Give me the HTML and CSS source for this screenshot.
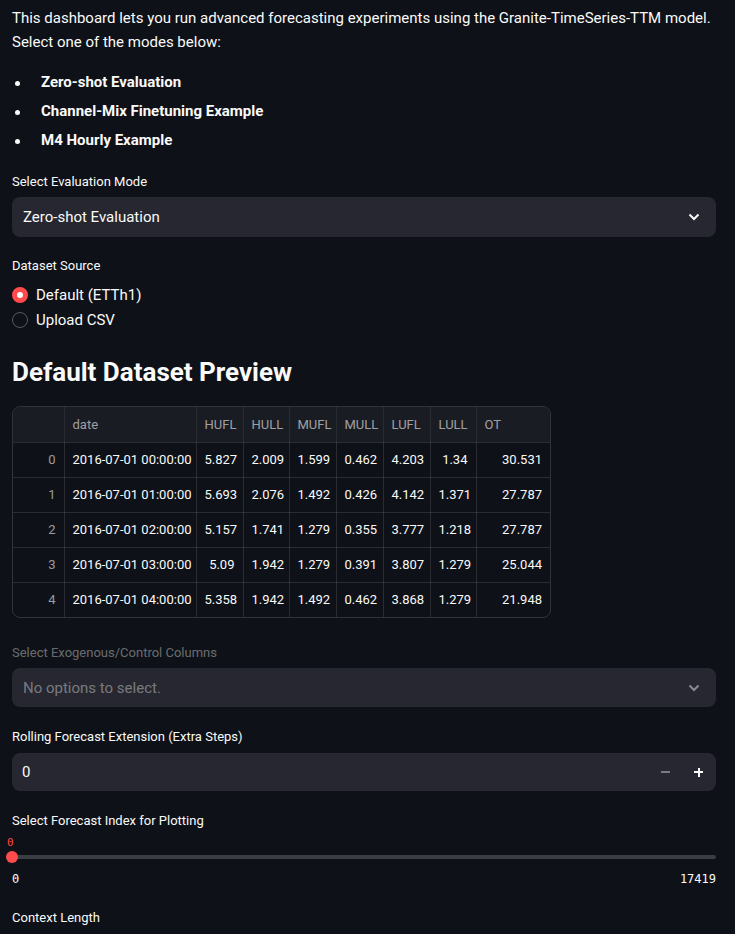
FILE: index.html
```html
<!DOCTYPE html>
<html>
<head>
<meta charset="utf-8">
<link rel="stylesheet" href="styles.css">
</head>
<body>
<main class="page">
  <p class="intro">This dashboard lets you run advanced forecasting experiments using the Granite-TimeSeries-TTM model. Select one of the modes below:</p>
  <ul class="modes">
    <li>Zero-shot Evaluation</li>
    <li>Channel-Mix Finetuning Example</li>
    <li>M4 Hourly Example</li>
  </ul>

  <div class="field f-mode">
    <label class="label">Select Evaluation Mode</label>
    <div class="select">
      <span>Zero-shot Evaluation</span>
      <svg class="chev" width="12" height="8" viewBox="0 0 12 8"><path d="M1.5 1.5 L6 6 L10.5 1.5" fill="none" stroke="#fafafa" stroke-width="2"/></svg>
    </div>
  </div>

  <div class="field f-source">
    <label class="label">Dataset Source</label>
    <div class="radios">
      <div class="radio on"><span class="dot"></span>Default (ETTh1)</div>
      <div class="radio"><span class="dot"></span>Upload CSV</div>
    </div>
  </div>

  <h2 class="heading">Default Dataset Preview</h2>

  <div class="tablewrap">
    <table class="df">
      <colgroup>
        <col class="w-idx"><col class="w-date"><col class="w-47"><col class="w-46"><col class="w-47"><col class="w-47"><col class="w-47"><col class="w-46"><col class="w-ot">
      </colgroup>
      <thead>
        <tr><th class="idx"></th><th>date</th><th>HUFL</th><th>HULL</th><th>MUFL</th><th>MULL</th><th>LUFL</th><th>LULL</th><th>OT</th></tr>
      </thead>
      <tbody>
        <tr><td class="idx">0</td><td class="c-date">2016-07-01 00:00:00</td><td>5.827</td><td>2.009</td><td>1.599</td><td>0.462</td><td>4.203</td><td>1.34</td><td>30.531</td></tr>
        <tr><td class="idx">1</td><td class="c-date">2016-07-01 01:00:00</td><td>5.693</td><td>2.076</td><td>1.492</td><td>0.426</td><td>4.142</td><td>1.371</td><td>27.787</td></tr>
        <tr><td class="idx">2</td><td class="c-date">2016-07-01 02:00:00</td><td>5.157</td><td>1.741</td><td>1.279</td><td>0.355</td><td>3.777</td><td>1.218</td><td>27.787</td></tr>
        <tr><td class="idx">3</td><td class="c-date">2016-07-01 03:00:00</td><td>5.09</td><td>1.942</td><td>1.279</td><td>0.391</td><td>3.807</td><td>1.279</td><td>25.044</td></tr>
        <tr><td class="idx">4</td><td class="c-date">2016-07-01 04:00:00</td><td>5.358</td><td>1.942</td><td>1.492</td><td>0.462</td><td>3.868</td><td>1.279</td><td>21.948</td></tr>
      </tbody>
    </table>
  </div>

  <div class="field f-exo">
    <label class="label disabled">Select Exogenous/Control Columns</label>
    <div class="select dis">
      <span>No options to select.</span>
      <svg class="chev" width="12" height="8" viewBox="0 0 12 8"><path d="M1.5 1.5 L6 6 L10.5 1.5" fill="none" stroke="#8a8b92" stroke-width="2"/></svg>
    </div>
  </div>

  <div class="field f-roll">
    <label class="label">Rolling Forecast Extension (Extra Steps)</label>
    <div class="number">
      <span class="val">0</span>
      <span class="step minus"></span>
      <span class="step plus"></span>
    </div>
  </div>

  <div class="field f-slider">
    <label class="label">Select Forecast Index for Plotting</label>
    <div class="slider">
      <div class="thumbval">0</div>
      <div class="track"><span class="thumb"></span></div>
      <div class="ticks"><span>0</span><span>17419</span></div>
    </div>
  </div>

  <div class="field f-ctx">
    <label class="label">Context Length</label>
  </div>
</main>
</body>
</html>
```

FILE: styles.css
```css
* { box-sizing: border-box; }
html, body { margin: 0; padding: 0; background: #0e1117; }
body {
  color: #fafafa;
  font-family: "Roboto", "Liberation Sans", sans-serif;
  font-size: 15px;
}
.page {
  padding: 0 19px 0 12px;
  width: 735px;
  height: 934px;
  overflow: hidden;
}
.intro {
  margin: 6px 0 0;
  line-height: 24px;
}
.modes {
  list-style: none;
  margin: 14px 0 0;
  padding: 0;
}
.modes li {
  position: relative;
  padding-left: 29px;
  font-weight: 700;
  line-height: 29px;
}
.modes li::before {
  content: "";
  position: absolute;
  left: 3px;
  top: 13px;
  width: 5px;
  height: 5px;
  border-radius: 50%;
  background: #fafafa;
}
.field { display: flex; flex-direction: column; }
.label {
  font-size: 13px;
  line-height: 18px;
  color: #fafafa;
}
.label.disabled { color: rgba(250,250,250,0.4); }
.f-mode { margin-top: 18px; }
.f-mode .label { margin-bottom: 6px; }
.select {
  height: 40px;
  background: #262730;
  border-radius: 8px;
  display: flex;
  align-items: center;
  justify-content: space-between;
  padding: 0 16px 0 11px;
  font-size: 15px;
}
.select.dis { height: 39px; color: rgba(250,250,250,0.4); }
.chev { display: block; }
.f-source { margin-top: 20px; }
.f-source .label { margin-bottom: 7px; }
.radios { display: flex; flex-direction: column; }
.radio {
  display: flex;
  align-items: center;
  height: 25px;
  font-size: 15px;
}
.dot {
  width: 16px;
  height: 16px;
  border-radius: 50%;
  border: 1px solid rgba(250,250,250,0.3);
  margin-right: 8px;
  flex: none;
}
.radio.on .dot {
  border: 5px solid #ff4b4b;
  background: #fafafa;
}
.heading {
  margin: 20px 0 0;
  font-size: 26px;
  font-weight: 700;
  line-height: 40px;
}
.tablewrap {
  margin-top: 14px;
  width: 539px;
  border: 1px solid rgba(250,250,250,0.15);
  border-radius: 8px;
  overflow: hidden;
}
.df {
  border-collapse: collapse;
  table-layout: fixed;
  font-size: 13px;
  width: 537px;
}
.w-idx { width: 51px; }
.w-date { width: 132px; }
.w-47 { width: 47px; }
.w-46 { width: 46px; }
.w-ot { width: 74px; }
.df th, .df td {
  border-right: 1px solid rgba(250,250,250,0.12);
  border-bottom: 1px solid rgba(250,250,250,0.12);
  padding: 0 8px;
  text-align: right;
  white-space: nowrap;
  overflow: hidden;
}
.df th:last-child, .df td:last-child { border-right: 0; }
.df tbody tr:last-child td { border-bottom: 0; }
.df th {
  height: 35px;
  font-weight: 400;
  text-align: left;
  color: rgba(250,250,250,0.6);
  background: #1a1c23;
}
.df td { height: 35px; }
.df .idx { color: rgba(250,250,250,0.6); }
.df .c-date { text-align: left; }
.f-exo { margin-top: 26px; }
.f-exo .label { margin-bottom: 6px; }
.f-roll { margin-top: 21px; }
.f-roll .label { margin-bottom: 7px; }
.number {
  height: 38px;
  background: #262730;
  border-radius: 8px;
  display: flex;
  align-items: center;
  padding: 0 1px 0 10px;
  font-size: 15px;
}
.number .val { flex: 1; }
.step { position: relative; width: 33px; height: 38px; }
.step::before, .step.plus::after {
  content: "";
  position: absolute;
  left: 50%;
  top: 50%;
  width: 9px;
  height: 2px;
  margin: -1px 0 0 -4.5px;
  background: #fafafa;
}
.step.minus::before { background: rgba(250,250,250,0.4); }
.step.plus::after { width: 2px; height: 9px; margin: -4.5px 0 0 -1px; }
.f-slider { margin-top: 21px; }
.slider { display: flex; flex-direction: column; }
.thumbval {
  font-family: "DejaVu Sans Mono", monospace;
  font-size: 11px;
  color: #ff4b4b;
  line-height: 14px;
  margin-top: 6px;
  margin-left: -5px;
}
.track {
  position: relative;
  margin-top: 5px;
  height: 4px;
  background: #3b3d45;
  border-radius: 2px;
}
.thumb {
  position: absolute;
  left: -6px;
  top: -4px;
  width: 12px;
  height: 12px;
  border-radius: 50%;
  background: #ff4b4b;
}
.ticks {
  display: flex;
  justify-content: space-between;
  font-family: "DejaVu Sans Mono", monospace;
  font-size: 12px;
  line-height: 16px;
  margin-top: 12px;
}
.f-ctx { margin-top: 22px; }
```
